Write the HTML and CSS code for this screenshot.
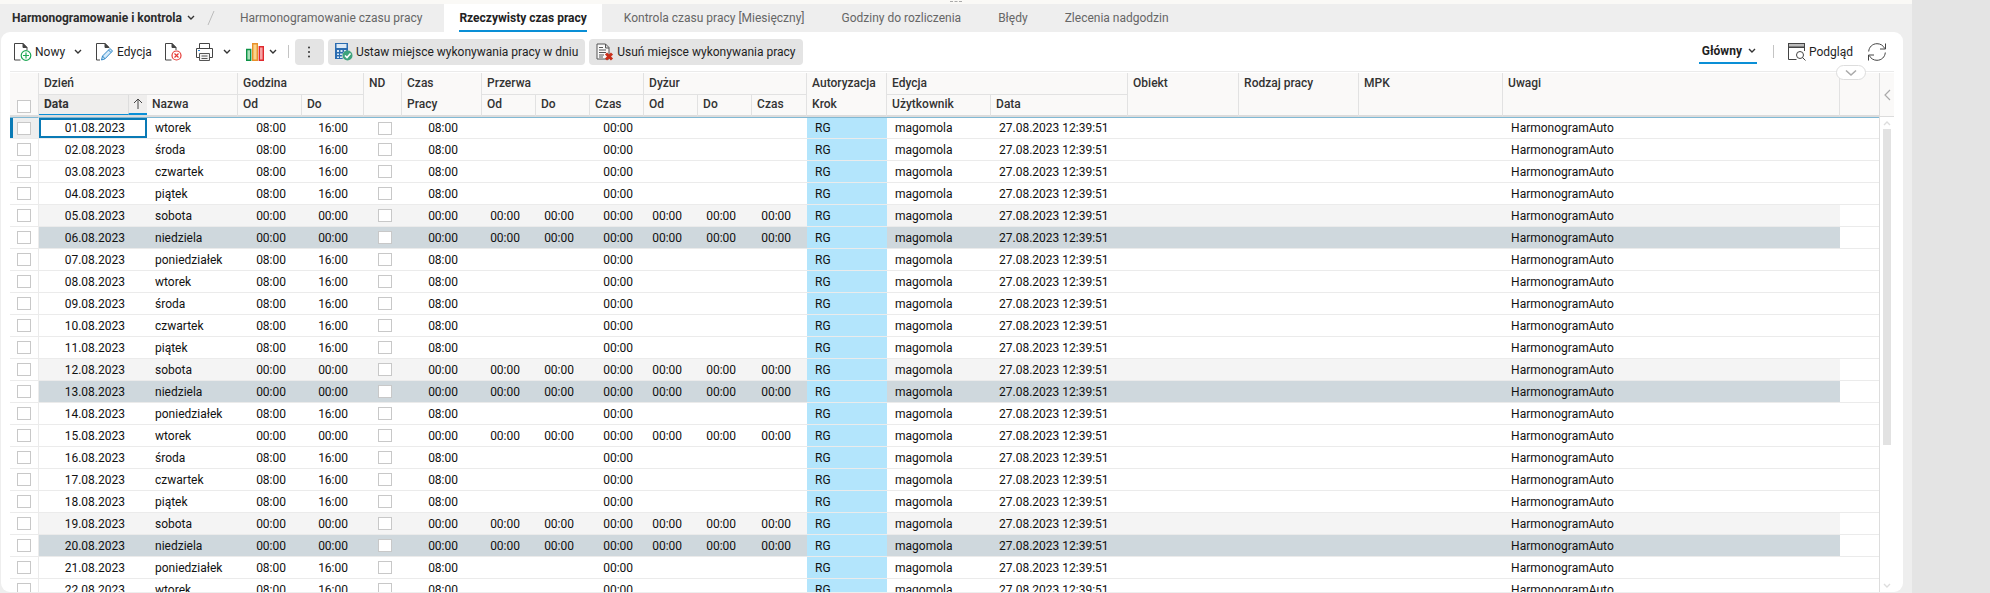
FILE: index.html
```html
<!DOCTYPE html>
<html lang="pl">

<head>
    <meta charset="UTF-8">
    <meta name="viewport" content="width=device-width, initial-scale=1.0">
    <title>Harmonogramowanie i kontrola</title>
    <link rel="stylesheet" href="styles.css">
</head>

<body>
    <div class="app">
        <div class="splitter"><span class="grip"></span></div>

        <nav class="tabs">
            <button class="module" type="button">Harmonogramowanie i kontrola
                <svg class="chev" viewBox="0 0 8 6"><path d="M1 1l3 3 3-3" /></svg>
            </button>
            <svg class="slash" viewBox="0 0 8 14"><path d="M1 14L7 0" /></svg>
            <a class="tab" href="#">Harmonogramowanie czasu pracy</a>
            <a class="tab active" href="#"><span>Rzeczywisty czas pracy</span></a>
            <a class="tab" href="#">Kontrola czasu pracy [Miesięczny]</a>
            <a class="tab" href="#">Godziny do rozliczenia</a>
            <a class="tab" href="#">Błędy</a>
            <a class="tab" href="#">Zlecenia nadgodzin</a>
        </nav>

        <main class="card">
            <div class="toolbar">
                <button class="tool" type="button">
                    <svg class="icon" viewBox="0 0 18 18">
                        <path class="line" d="M6.500 17H.5V.5H9l4 4V7M9 .5v4h4" />
                        <path class="fold" d="M9 0l4.500 4.500H9z" />
                        <circle class="green" cx="12" cy="12.500" r="4.800" />
                        <path class="green" d="M12 9.500v6M9 12.500h6" />
                    </svg>
                    Nowy
                </button>
                <button class="drop drop-new" type="button" aria-label="Nowy - menu">
                    <svg class="chev" viewBox="0 0 8 6"><path d="M1 1l3 3 3-3" /></svg>
                </button>
                <button class="tool tool-edit" type="button">
                    <svg class="icon" viewBox="0 0 18 18">
                        <path class="line" d="M4 17H.5V.5H9l4 4M9 .5v4h4" />
                        <path class="fold" d="M9 0l4.500 4.500H9z" />
                        <path class="pen" d="M5.500 17l1-4L14 5.500l2.500 2.500L9 15.800zM6.500 13L9 15.800M12.500 7l2.500 2.500" />
                    </svg>
                    Edycja
                </button>
                <button class="tool" type="button" aria-label="Usuń">
                    <svg class="icon" viewBox="0 0 18 18">
                        <path class="line" d="M6.500 17H.5V.5H7l4 4V7M7 .5v4h4" />
                        <path class="fold" d="M7 0l4.500 4.500H7z" />
                        <circle class="red" cx="11.500" cy="12.500" r="4.500" />
                        <path class="red" d="M9.500 10.500l4 4M13.500 10.500l-4 4" />
                    </svg>
                </button>
                <button class="tool" type="button" aria-label="Drukuj">
                    <svg class="icon" viewBox="0 0 18 18">
                        <path class="line" d="M3.500 5.500V.5h10v5M3.500 14.500h-3v-9h16v9h-3" />
                        <path class="paper" d="M3.500 10.500h10v7h-10zM5.500 13h6M5.500 15.500h6" />
                        <path class="bluedot" d="M2 7h2v1H2z" />
                    </svg>
                </button>
                <button class="drop" type="button" aria-label="Drukuj - menu">
                    <svg class="chev" viewBox="0 0 8 6"><path d="M1 1l3 3 3-3" /></svg>
                </button>
                <button class="tool tool-chart" type="button" aria-label="Wykres">
                    <svg class="icon" viewBox="0 0 18 18">
                        <path class="bar-g" d="M.7 6.500h4v10.800h-4z" />
                        <path class="bar-o" d="M6.700.7h4.600v16.600H6.700z" />
                        <path class="bar-r" d="M13.300 3.700h4v13.600h-4z" />
                    </svg>
                    <svg class="chev" viewBox="0 0 8 6"><path d="M1 1l3 3 3-3" /></svg>
                </button>
                <span class="divider"></span>
                <button class="filled dots" type="button" aria-label="Więcej">
                    <svg viewBox="0 0 4 12"><circle cx="2" cy="1.500" r="1" /><circle cx="2" cy="6" r="1" /><circle cx="2" cy="10.500" r="1" /></svg>
                </button>
                <button class="filled" type="button">
                    <svg class="icon" viewBox="0 0 18 18">
                        <path class="calc" d="M0 0h13v8a5 5 0 0 0-5 8H0z" />
                        <path class="calc-in" d="M1.500 1h10v4h-10zM2 7h2v2H2zM5.500 7h2v2h-2zM9 7h2v1H9zM2 10.500h2v1.500H2zM5 10.500h2v1.500H5zM2 13.500h2V15H2zM5 13.500h2V15H5z" />
                        <circle class="ok" cx="12.500" cy="12.500" r="5" />
                        <path class="tick" d="M10 12.500l2 2 3.500-4" />
                    </svg>
                    Ustaw miejsce wykonywania pracy w dniu
                </button>
                <button class="filled" type="button">
                    <svg class="icon" viewBox="0 0 18 18">
                        <path class="page" d="M1 1h8.500L13 4.500V16H1zM9.500 1v4H13M3 4.500h4M3 7h7M3 9.500h7M3 12h5M3 14h4" />
                        <path class="cross" d="M10 10.500l6 6M16 10.500l-6 6" />
                    </svg>
                    Usuń miejsce wykonywania pracy
                </button>

                <button class="view" type="button">Główny
                    <svg class="chev" viewBox="0 0 8 6"><path d="M1 1l3 3 3-3" /></svg>
                </button>
                <span class="divider"></span>
                <button class="tool" type="button">
                    <svg class="icon" viewBox="0 0 18 18">
                        <path class="fold" d="M0 0h17v5H0z" />
                        <path class="grey" d="M1 1h15v2.500H1z" />
                        <path class="line" d="M16.500 4v4M.5 3v13.500h8" />
                        <circle class="line" cx="12" cy="12" r="3.500" />
                        <path class="line" d="M14.500 14.500l3 3" />
                    </svg>
                    Podgląd
                </button>
                <button class="tool refresh" type="button" aria-label="Odśwież">
                    <svg class="icon" viewBox="0 0 18 18">
                        <path class="line" d="M.7 8.500C1 4 4.500.7 9 .7c3.500 0 6.300 1.800 7.700 4.800M17.500.5v5.500H12M17.300 9.500c-.3 4.500-3.800 7.800-8.300 7.800-3.500 0-6.300-1.800-7.700-4.800M.5 17.500V12H6" />
                    </svg>
                </button>
            </div>

            <button class="expander" type="button" aria-label="Rozwiń">
                <svg viewBox="0 0 12 8"><path d="M1 1.500l5 4.500 5-4.500" /></svg>
            </button>

            <div class="grid">
                <div class="table-wrap">
                    <table class="table">
                        <colgroup>
                            <col class="c-sel"><col class="c-day"><col class="c-name">
                            <col class="c-from"><col class="c-to"><col class="c-nd"><col class="c-work">
                            <col class="c-time"><col class="c-time"><col class="c-time">
                            <col class="c-time"><col class="c-time"><col class="c-last">
                            <col class="c-auth"><col class="c-user"><col class="c-edit">
                            <col class="c-obj"><col class="c-kind"><col class="c-mpk"><col><col class="c-rest">
                        </colgroup>
                        <thead>
                            <tr>
                                <th class="sel" rowspan="2"><input class="check" type="checkbox" aria-label="Zaznacz wszystkie"></th>
                                <th class="group" colspan="2">Dzień</th>
                                <th class="group" colspan="2">Godzina</th>
                                <th class="tall" rowspan="2">ND</th>
                                <th>Czas</th>
                                <th class="group" colspan="3">Przerwa</th>
                                <th class="group" colspan="3">Dyżur</th>
                                <th>Autoryzacja</th>
                                <th class="group" colspan="2">Edycja</th>
                                <th class="tall" rowspan="2">Obiekt</th>
                                <th class="tall" rowspan="2">Rodzaj pracy</th>
                                <th class="tall" rowspan="2">MPK</th>
                                <th class="tall" rowspan="2">Uwagi</th>
                                <th class="tall" rowspan="2"></th>
                            </tr>
                            <tr>
                                <th class="sorted">
                                    <div class="sort">Data
                                        <span class="arrow"><svg viewBox="0 0 10 11"><path d="M5 11V1M1 5l4-4 4 4" /></svg></span>
                                    </div>
                                </th>
                                <th>Nazwa</th>
                                <th>Od</th>
                                <th>Do</th>
                                <th>Pracy</th>
                                <th>Od</th>
                                <th>Do</th>
                                <th>Czas</th>
                                <th>Od</th>
                                <th>Do</th>
                                <th>Czas</th>
                                <th>Krok</th>
                                <th>Użytkownik</th>
                                <th>Data</th>
                            </tr>
                        </thead>
                        <tbody id="rows"></tbody>
                    </table>
                </div>
                <div class="side">
                    <button class="collapse" type="button" aria-label="Zwiń panel">
                        <svg viewBox="0 0 7 12"><path d="M6 1L1 6l5 5" /></svg>
                    </button>
                    <div class="scroll">
                        <svg viewBox="0 0 8 5"><path d="M1 4l3-3 3 3" /></svg>
                        <div class="track"><div class="thumb"></div></div>
                        <svg viewBox="0 0 8 5"><path d="M1 1l3 3 3-3" /></svg>
                    </div>
                </div>
            </div>
        </main>
    </div>

    <script src="script.js"></script>
</body>

</html>
```
FILE: styles.css
```css
* {
    box-sizing: border-box;
}

body {
    margin: 0;
    height: 100vh;
    overflow: hidden;
    background: #e4e4e4;
    padding-right: 78px;
    font-family: Roboto, "Liberation Sans", sans-serif;
    font-size: 12px;
    color: #1f1f1f;
}

button {
    margin: 0;
    padding: 0;
    border: 0;
    background: none;
    font: inherit;
    color: inherit;
    white-space: nowrap;
}

svg {
    display: block;
    flex: none;
    fill: none;
    stroke: #444;
}

.app {
    display: flex;
    flex-direction: column;
    height: 100%;
    background: #eee;
    padding-bottom: 1px;
}

.splitter {
    display: flex;
    justify-content: center;
    height: 4px;
    flex: none;
    background: #faf9f6;
}

.grip {
    width: 12px;
    height: 2px;
    border-bottom: 1px dashed #aaa;
}

/* zakładki */
.tabs {
    display: flex;
    align-items: center;
    height: 28px;
    flex: none;
    padding-left: 12px;
}

.module {
    display: flex;
    align-items: center;
    gap: 5px;
    font-weight: 700;
    color: #2b2b2b;
}

.slash {
    width: 8px;
    height: 14px;
    margin: 0 10px 0 12px;
    stroke: #bbb;
}

.tab {
    display: flex;
    align-items: center;
    height: 28px;
    padding: 0 15px;
    margin-right: 7px;
    color: #666;
    text-decoration: none;
    white-space: nowrap;
}

.tab.active {
    background: #fff;
    color: #222;
    font-weight: 700;
}

.tab.active span {
    line-height: 24px;
    padding-top: 2px;
    border-bottom: 2px solid #0a8fd6;
}

.chev {
    width: 8px;
    height: 6px;
    stroke: #333;
    stroke-width: 1.4;
}

/* pasek narzędzi */
.card {
    position: relative;
    display: flex;
    flex-direction: column;
    flex: 1;
    min-height: 0;
    margin: 0 9px 0 1px;
    padding: 0 9px;
    background: #fff;
    border-radius: 9px;
    overflow: hidden;
}

.toolbar {
    display: flex;
    align-items: center;
    height: 40px;
    flex: none;
    border-bottom: 1px solid #ebebeb;
    padding: 0 8px 0 4px;
}

.tool {
    display: flex;
    align-items: center;
    gap: 3px;
    margin-right: 13px;
}

.tool + .drop {
    margin-left: -4px;
}

.drop-new {
    margin-right: 14px;
}

.icon {
    width: 18px;
    height: 18px;
}

.tool-chart {
    margin: 0 11px 0 15px;
    gap: 5px;
}

.divider {
    width: 1px;
    height: 13px;
    background: #c4c4c4;
    margin-right: 6px;
}

.filled {
    display: flex;
    align-items: center;
    justify-content: center;
    gap: 3px;
    height: 26px;
    padding: 0 7px;
    margin-right: 4px;
    border-radius: 4px;
    background: #e4e4e4;
}

.dots {
    width: 29px;
}

.dots svg {
    width: 4px;
    height: 12px;
    fill: #333;
    stroke: none;
}

.view {
    display: flex;
    align-items: center;
    gap: 6px;
    height: 24px;
    margin: 0 16px 0 auto;
    padding: 0 1px 0 3px;
    border-bottom: 2px solid #0a8fd6;
    font-weight: 700;
}

.view + .divider {
    margin-right: 14px;
}

.view ~ .tool {
    margin-right: 15px;
}

.toolbar .refresh {
    margin-right: 0;
}

.fold { fill: #444; stroke: none; }
.grey { fill: #bbb; stroke: none; }
.green { stroke: #1fa855; stroke-width: 1.2; }
.red { stroke: #e53935; stroke-width: 1.2; }
.pen { fill: #d4eafa; stroke: #2f86c6; }
.paper { fill: #f2f2f2; stroke: #555; }
.bluedot { fill: #2f86d6; stroke: none; }
.bar-g { fill: #a9dfb8; stroke: #0e9247; stroke-width: 1.4; }
.bar-o { fill: #fbd48b; stroke: #e8912a; stroke-width: 1.4; }
.bar-r { fill: #f6a5a5; stroke: #e0282d; stroke-width: 1.4; }
.calc { fill: #2b6cb0; stroke: none; }
.calc-in { fill: #dce9f5; stroke: none; }
.ok { fill: #3fa37c; stroke: none; }
.tick { stroke: #fff; stroke-width: 1.6; }
.page { fill: #fafafa; stroke: #555; }
.cross { stroke: #c9301c; stroke-width: 3; }

.expander {
    position: absolute;
    top: 33px;
    right: 37px;
    display: flex;
    align-items: center;
    justify-content: center;
    width: 30px;
    height: 15px;
    border: 1px solid #ddd;
    border-radius: 8px;
    background: #fff;
    z-index: 1;
}

.expander svg {
    width: 12px;
    height: 8px;
    stroke: #aaa;
    stroke-width: 1.6;
}

/* tabela */
.grid {
    display: flex;
    flex: 1;
    min-height: 0;
    padding-top: 1px;
}

.table-wrap {
    flex: 1;
    min-width: 0;
    overflow: hidden;
    border-right: 1px solid #ddd;
}

.table {
    width: 100%;
    table-layout: fixed;
    border-collapse: separate;
    border-spacing: 0;
}

.c-sel { width: 29px; }
.c-day { width: 108px; }
.c-name { width: 91px; }
.c-from { width: 64px; }
.c-to { width: 62px; }
.c-nd { width: 38px; }
.c-work { width: 80px; }
.c-time { width: 54px; }
.c-last { width: 55px; }
.c-auth { width: 80px; }
.c-user { width: 104px; }
.c-edit { width: 137px; }
.c-obj { width: 111px; }
.c-kind { width: 120px; }
.c-mpk { width: 144px; }
.c-rest { width: 39px; }

th {
    height: 22px;
    padding: 0 0 2px 5px;
    background: #faf9f8;
    border-right: 1px solid #e2e2e2;
    font-weight: 500;
    line-height: 15px;
    text-align: left;
    white-space: nowrap;
    color: #333;
}

th.group {
    padding-bottom: 0;
    border-bottom: 1px solid #e2e2e2;
}

thead tr:last-child th,
th.tall,
th.sel {
    border-bottom: 2px solid #dcdcdc;
}

th.tall {
    vertical-align: top;
    padding-top: 3px;
}

th:last-child {
    border-right: 0;
}

thead tr:last-child th:last-child {
    border-right: 1px solid #e2e2e2;
}

th.sel {
    vertical-align: bottom;
    padding: 0 0 2px 7px;
}

th.sorted {
    padding: 0;
    border-right: 0;
    background: #efeeed;
    font-weight: 700;
}

.sort {
    display: flex;
    align-items: center;
    justify-content: space-between;
    height: 20px;
    padding-left: 5px;
    border-bottom: 1px solid #0a8fd6;
}

.arrow {
    display: flex;
    align-items: center;
    justify-content: center;
    width: 19px;
    height: 20px;
    border-left: 1px solid #ddd;
    border-bottom: 2px solid #0a8fd6;
}

.arrow svg {
    width: 10px;
    height: 11px;
}

.check {
    appearance: none;
    display: block;
    width: 14px;
    height: 13px;
    margin: 0;
    border: 1px solid #c8c8c8;
    background: #fff;
}

td {
    height: 22px;
    padding: 0 0 0 8px;
    border-bottom: 1px solid #ebebeb;
    white-space: nowrap;
    line-height: 16px;
    color: #111;
}

td.sel {
    border-right: 1px solid #ebebeb;
    padding-left: 7px;
}

td.nd {
    padding-left: 14px;
}

td.num {
    padding: 0 16px 0 0;
    text-align: right;
}

td.date {
    padding-right: 22px;
}

td.work {
    padding-right: 24px;
}

td.total {
    padding-right: 11px;
}

td.auth {
    background: #b3e5fc;
}

.saturday td {
    background: #f4f4f4;
}

.sunday td {
    background: #cfd8dd;
}

.table tr td.sel,
.table tr td.rest {
    background: #fff;
}

.table tr td.auth {
    background: #b3e5fc;
}

.first td {
    border-top: 1px solid #82b9d4;
}

.table .first td.sel {
    background: #eee;
    box-shadow: inset 3px 0 #0a7ab5;
}

.first td.date {
    box-shadow: inset 0 0 0 2px #0a7ab5;
}

/* prawa krawędź z paskiem przewijania */
.side {
    display: flex;
    flex-direction: column;
    width: 14px;
}

.collapse {
    display: flex;
    align-items: center;
    justify-content: center;
    height: 44px;
    flex: none;
    background: #faf9f8;
    border-bottom: 1px solid #dcdcdc;
}

.collapse svg {
    width: 7px;
    height: 12px;
    stroke: #aaa;
    stroke-width: 1.2;
}

.scroll {
    display: flex;
    flex-direction: column;
    align-items: center;
    flex: 1;
    padding: 4px 0;
}

.scroll svg {
    width: 8px;
    height: 5px;
    stroke: #ddd;
    stroke-width: 1.4;
}

.track {
    flex: 1;
    width: 8px;
    padding: 3px 0;
}

.thumb {
    height: 70%;
    background: #e2e2e2;
}
```
FILE: script.js
```js
var names = ['wtorek', 'środa', 'czwartek', 'piątek', 'sobota', 'niedziela', 'poniedziałek'];
var free = [5, 6, 12, 13, 15, 19, 20];
var html = '';

function time(value, cls) {
    return '<td class="num ' + (cls || '') + '">' + value + '</td>';
}

for (var day = 1; day <= 22; day++) {
    var name = names[(day - 1) % 7];
    var date = (day < 10 ? '0' + day : day) + '.08.2023';
    var off = free.indexOf(day) != -1;
    var zero = off ? '00:00' : '';
    var cls = day == 1 ? 'first' : name == 'sobota' ? 'saturday' : name == 'niedziela' ? 'sunday' : '';

    html += '<tr class="' + cls + '">'
        + '<td class="sel"><input class="check" type="checkbox" aria-label="Zaznacz ' + date + '"></td>'
        + time(date, 'date')
        + '<td>' + name + '</td>'
        + time(off ? '00:00' : '08:00') + time(off ? '00:00' : '16:00')
        + '<td class="nd"><input class="check" type="checkbox" aria-label="ND ' + date + '"></td>'
        + time(off ? '00:00' : '08:00', 'work')
        + time(zero) + time(zero) + time('00:00', 'total')
        + time(zero) + time(zero) + time(zero)
        + '<td class="auth">RG</td>'
        + '<td>magomola</td>'
        + '<td>27.08.2023 12:39:51</td>'
        + '<td></td><td></td><td></td>'
        + '<td>HarmonogramAuto</td>'
        + '<td class="rest"></td></tr>';
}

document.getElementById('rows').innerHTML = html;
```
